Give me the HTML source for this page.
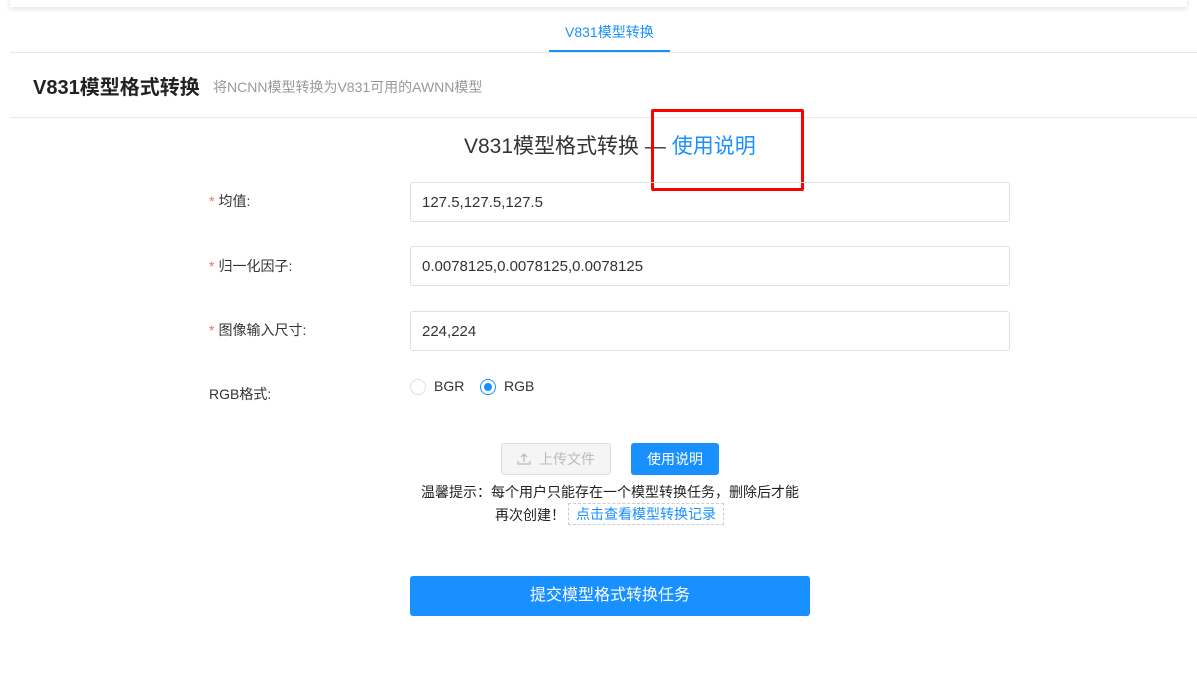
<!DOCTYPE html>
<html><head><meta charset="utf-8"><style>
*{box-sizing:border-box;margin:0;padding:0}
body{width:1197px;height:677px;background:#fff;font-family:"Liberation Sans","Noto Sans CJK SC",sans-serif;position:relative;overflow:hidden;color:#333}
.a{position:absolute}
.topbar{left:10px;top:-5px;width:1177px;height:12px;background:#fff;box-shadow:0 2px 6px rgba(0,0,0,.12)}
.inp{position:absolute;left:410px;width:600px;height:40px;border:1px solid #dcdfe6;border-radius:3px;font-size:15px;color:#333;padding-left:11px;line-height:39px}
.lbl{position:absolute;left:209px;font-size:14px;color:#333}
.lbl b{color:#f56c6c;font-weight:normal;margin-right:4px}
</style></head><body>
<div class="a topbar"></div>
<div class="a" style="left:565px;top:22px;font-size:14px;color:#1890ff">V831模型转换</div>
<div class="a" style="left:549px;top:50px;width:121px;height:3px;background:#1890ff"></div>
<div class="a" style="left:10px;top:52px;width:1187px;height:1px;background:#e8e8e8"></div>
<div class="a" style="left:33px;top:71px;font-size:20px;font-weight:bold;color:#222">V831模型格式转换</div>
<div class="a" style="left:213px;top:77px;font-size:14px;color:#999">将NCNN模型转换为V831可用的AWNN模型</div>
<div class="a" style="left:10px;top:117px;width:1187px;height:1px;background:#e8e8e8"></div>
<div class="a" style="left:464px;top:130px;font-size:21px;color:#333">V831模型格式转换 — <span style="color:#1890ff">使用说明</span></div>
<div class="a" style="left:651px;top:109px;width:153px;height:82px;border:3px solid #f00;border-radius:2px"></div>
<div class="lbl" style="top:191px"><b>*</b>均值:</div>
<div class="inp" style="top:182px">127.5,127.5,127.5</div>
<div class="lbl" style="top:256px"><b>*</b>归一化因子:</div>
<div class="inp" style="top:246px">0.0078125,0.0078125,0.0078125</div>
<div class="lbl" style="top:320px"><b>*</b>图像输入尺寸:</div>
<div class="inp" style="top:311px">224,224</div>
<div class="lbl" style="top:384px">RGB格式:</div>
<div class="a" style="left:410px;top:379px;width:16px;height:16px;border:1px solid #dcdfe6;border-radius:50%"></div>
<div class="a" style="left:434px;top:378px;font-size:14px">BGR</div>
<div class="a" style="left:480px;top:379px;width:16px;height:16px;border:1px solid #1890ff;border-radius:50%"><div style="margin:3px;width:8px;height:8px;border-radius:50%;background:#1890ff"></div></div>
<div class="a" style="left:504px;top:378px;font-size:14px">RGB</div>
<div class="a" style="left:501px;top:443px;width:110px;height:32px;border:1px solid #ddd;background:#f5f5f5;border-radius:3px;color:#bbb;font-size:14px;line-height:30px;padding-left:37px">上传文件
<svg style="position:absolute;left:15px;top:8px" width="14" height="14" viewBox="0 0 14 14" fill="none" stroke="#bbb" stroke-width="1.3"><path d="M7 10V2M4 5l3-3 3 3M1 9v3h12V9"/></svg></div>
<div class="a" style="left:631px;top:443px;width:88px;height:32px;background:#1890ff;border-radius:3px;color:#fff;font-size:14px;line-height:32px;text-align:center">使用说明</div>
<div class="a" style="left:421px;top:482px;font-size:14px;color:#222">温馨提示：每个用户只能存在一个模型转换任务，删除后才能</div>
<div class="a" style="left:495px;top:505px;font-size:14px;color:#222">再次创建！</div>
<div class="a" style="left:568px;top:503px;width:156px;height:22px;border:1px dashed #ccc;color:#1890ff;font-size:14px;line-height:20px;text-align:center">点击查看模型转换记录</div>
<div class="a" style="left:410px;top:576px;width:400px;height:40px;background:#1890ff;border-radius:3px;color:#fff;font-size:16px;line-height:40px;text-align:center">提交模型格式转换任务</div>
</body></html>
